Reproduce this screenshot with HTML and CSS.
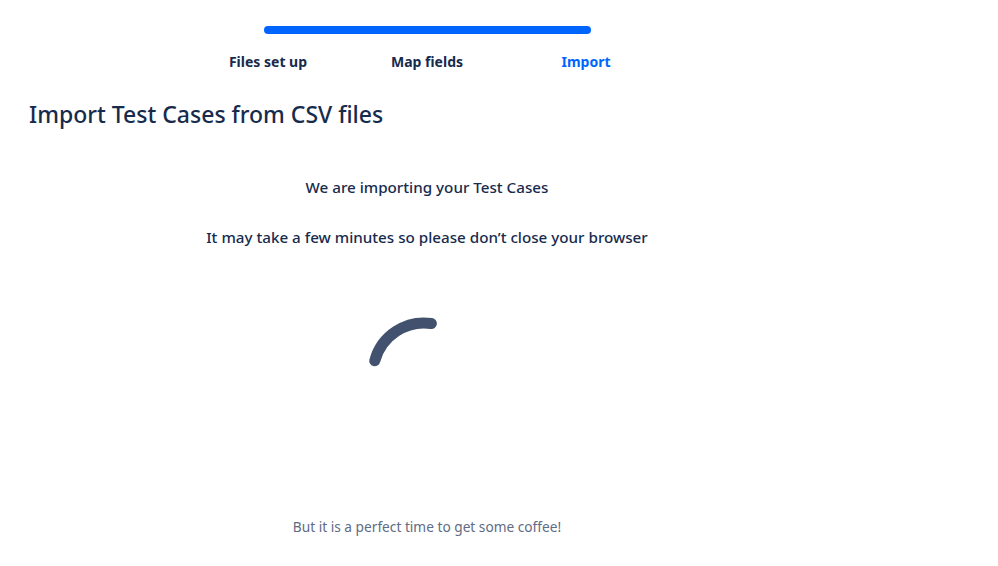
FILE: index.html
```html
<!DOCTYPE html>
<html lang="en">

<head>
    <meta charset="UTF-8">
    <meta name="viewport" content="width=device-width, initial-scale=1.0">
    <title>Import Test Cases from CSV files</title>
    <link rel="stylesheet" href="styles.css">
</head>

<body>
    <div class="page">
        <div class="stepper">
            <div class="track"></div>
            <div class="steps">
                <span class="step">Files set up</span>
                <span class="step">Map fields</span>
                <span class="step current">Import</span>
            </div>
        </div>

        <h1>Import Test Cases from CSV files</h1>

        <div class="status">
            <p class="status-line">We are importing your Test Cases</p>
            <p class="status-line">It may take a few minutes so please don’t close your browser</p>

            <div class="spinner">
                <svg width="120" height="120" viewBox="0 0 120 120">
                    <circle cx="57" cy="60" r="51" fill="none" stroke="#42526e" stroke-width="11"
                        stroke-linecap="round" stroke-dasharray="74 400" transform="rotate(-165 57 60)" />
                </svg>
            </div>

            <p class="coffee">But it is a perfect time to get some coffee!</p>
        </div>
    </div>
</body>

</html>
```

FILE: styles.css
```css
body {
    margin: 0;
    font-family: "Noto Sans", Arial, sans-serif;
    color: #172b4d;
    background: #fff;
}

.page {
    width: 796px;
    padding: 0 29px;
}

.stepper {
    padding-top: 26px;
    display: flex;
    flex-direction: column;
    align-items: center;
}

.track {
    width: 327px;
    height: 8px;
    border-radius: 4px;
    background: #0065ff;
}

.steps {
    display: grid;
    grid-template-columns: repeat(3, 159px);
    margin-top: 18px;
}

.step {
    text-align: center;
    font-size: 14px;
    font-weight: 700;
    line-height: 20px;
}

.step.current {
    color: #0065ff;
}

h1 {
    margin: 26px 0 0;
    font-size: 23px;
    font-weight: 500;
    line-height: 32px;
}

.status {
    text-align: center;
    padding-top: 45px;
}

.status-line {
    margin: 0 0 26px;
    font-size: 15.2px;
    font-weight: 500;
    line-height: 24px;
}

.spinner {
    display: flex;
    justify-content: center;
    margin-top: 65px;
}

.coffee {
    margin: 83px 0 0;
    font-size: 13.7px;
    line-height: 20px;
    color: #5e6c84;
}
```
